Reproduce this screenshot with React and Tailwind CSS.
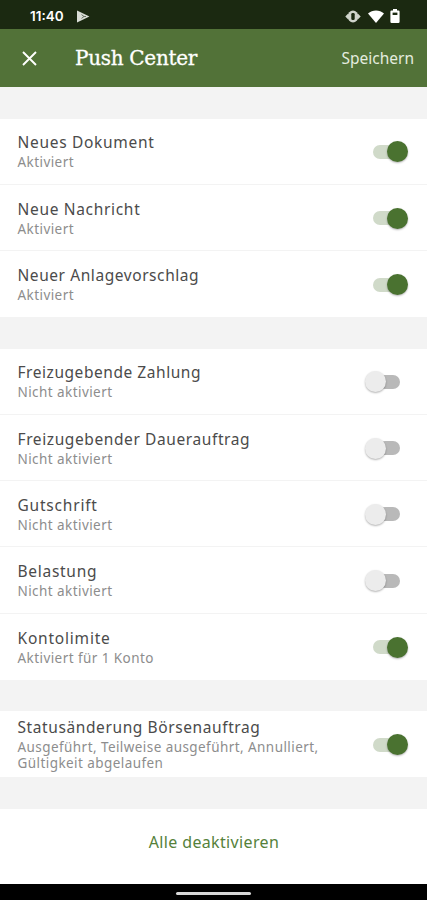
import { useState } from 'react';

/* Push-Einstellungen, nach Abschnitten gruppiert */
const SECTIONS = [
    [
        { id: 'document', title: 'Neues Dokument', status: 'Aktiviert', on: true, tracking: 'tracking-[0.7px]' },
        { id: 'message', title: 'Neue Nachricht', status: 'Aktiviert', on: true, tracking: 'tracking-[0.68px]' },
        { id: 'proposal', title: 'Neuer Anlagevorschlag', status: 'Aktiviert', on: true, tracking: 'tracking-[0.57px]' },
    ],
    [
        { id: 'payment', title: 'Freizugebende Zahlung', status: 'Nicht aktiviert', on: false, tracking: 'tracking-[0.55px]' },
        { id: 'order', title: 'Freizugebender Dauerauftrag', status: 'Nicht aktiviert', on: false, tracking: 'tracking-[0.6px]' },
        { id: 'credit', title: 'Gutschrift', status: 'Nicht aktiviert', on: false, tracking: 'tracking-[0.8px]' },
        { id: 'debit', title: 'Belastung', status: 'Nicht aktiviert', on: false, tracking: 'tracking-[0.72px]' },
        { id: 'limit', title: 'Kontolimite', status: 'Aktiviert für 1 Konto', on: true, tracking: 'tracking-[0.8px]' },
    ],
    [
        {
            id: 'exchange',
            title: 'Statusänderung Börsenauftrag',
            status: 'Ausgeführt, Teilweise ausgeführt, Annulliert, Gültigkeit abgelaufen',
            on: true,
            tracking: 'tracking-[0.6px]',
        },
    ],
];

/* Statusleiste */
const StatusBar = () => (
    <div className="flex h-[29px] shrink-0 items-center bg-[#1b2911] pt-[3px] pr-[27px] pl-[30px] text-white">
        <span className="font-['Inter',sans-serif] text-[13.5px] font-semibold">11:40</span>
        <svg className="ml-[12px]" width="14" height="13" viewBox="0 0 14 13">
            <path d="M1 0.6 13.4 6.5 1 12.4Z" fill="#d9ddd6" />
            <path d="M5.5 4.6 8 6.5 5.5 8.4M8 6.5H10" stroke="#5e6857" strokeWidth="0.9" fill="none" />
        </svg>
        <div className="ml-auto flex items-center">
            <svg width="16" height="13" viewBox="0 0 16 13">
                <path d="M0.3 6.5 3.2 3.6V9.4ZM15.7 6.5 12.8 3.6V9.4Z" fill="#cfd4cb" />
                <ellipse cx="8" cy="6.5" rx="5.3" ry="6" fill="#cfd4cb" />
                <rect x="6.3" y="3" width="3.4" height="7" rx="1.2" fill="#1b2911" />
            </svg>
            <svg className="ml-[7px]" width="16" height="13" viewBox="0 0 16 13">
                <path d="M0 3.4C4.5-0.6 11.5-0.6 16 3.4L8 13Z" fill="#fff" />
            </svg>
            <svg className="ml-[6px]" width="10" height="14" viewBox="0 0 10 14">
                <path d="M3 0h4v1.4h1.4Q9.6 1.4 9.6 2.6v10.2Q9.6 14 8.4 14H1.6Q.4 14 .4 12.8V2.6Q.4 1.4 1.6 1.4H3Z" fill="#fff" />
                <path d="M2.6 3.6h4.8V6H2.6Z" fill="#1b2911" />
            </svg>
        </div>
    </div>
);

/* Schalter */
const Toggle = ({ on, onClick, label }) => (
    <button
        role="switch"
        aria-checked={on}
        aria-label={label}
        onClick={onClick}
        className={`mt-[1.5px] flex h-[22px] w-[35px] shrink-0 cursor-pointer items-center ${on ? 'justify-end' : 'mr-[8px] justify-start'}`}
    >
        {on ? (
            <>
                <span className="-mr-[9px] h-[14px] w-[23px] rounded-full bg-[#d0dac9]" />
                <span className="z-10 size-[21px] rounded-full bg-[#4a7230] shadow-[0_1px_2px_rgba(0,0,0,0.3)]" />
            </>
        ) : (
            <>
                <span className="z-10 size-[21px] rounded-full bg-[#ececec] shadow-[0_1px_2px_rgba(0,0,0,0.3)]" />
                <span className="-ml-[8px] h-[14px] w-[22px] rounded-full bg-[#b9b9b9]" />
            </>
        )}
    </button>
);

/* Einzelne Einstellung */
const SettingRow = ({ item, on, onToggle }) => (
    <div className="flex h-[66.25px] items-center border-b border-[#f3f3f3] pr-[19px] pl-[17.5px] last:border-b-0">
        <div className="w-[325px] pt-[0.5px]">
            <div className={`text-[15.5px] leading-[21px] whitespace-nowrap text-[#4b4b4b] ${item.tracking}`}>{item.title}</div>
            <div className="mt-px text-[13.5px] leading-[16px] tracking-[0.43px] text-[#8d8d8d]">{item.status}</div>
        </div>
        <div className="ml-auto">
            <Toggle on={on} onClick={onToggle} label={item.title} />
        </div>
    </div>
);

const App = () => {
    /* Schalterzustand pro Einstellung */
    const [enabled, setEnabled] = useState(() =>
        Object.fromEntries(SECTIONS.flat().map((item) => [item.id, item.on]))
    );

    const toggle = (id) => setEnabled((prev) => ({ ...prev, [id]: !prev[id] }));

    const disableAll = () =>
        setEnabled((prev) => Object.fromEntries(Object.keys(prev).map((id) => [id, false])));

    return (
        <div className="flex h-[900px] w-[427px] flex-col overflow-hidden bg-[#f3f3f3] font-['Noto_Sans',sans-serif]">
            <StatusBar />

            {/* Kopfzeile */}
            <header className="flex h-[58px] shrink-0 items-center bg-[#527238] pr-[13px] pl-[22px] text-white">
                <svg width="15" height="15" viewBox="0 0 15 15" stroke="#fff" strokeWidth="1.9">
                    <path d="M1 1 14 14M14 1 1 14" />
                </svg>
                <h1 className="ml-[38px] font-['DejaVu_Serif',serif] text-[20px] tracking-[-0.3px] [-webkit-text-stroke:0.3px_white]">Push Center</h1>
                <button className="ml-auto cursor-pointer pt-px text-[15.5px] text-[#e4ecdf]">Speichern</button>
            </header>

            {/* Abschnitte */}
            <main className="mt-[31.5px] flex shrink-0 flex-col gap-[31.25px]">
                {SECTIONS.map((items) => (
                    <section key={items[0].id} className="bg-white">
                        {items.map((item) => (
                            <SettingRow key={item.id} item={item} on={enabled[item.id]} onToggle={() => toggle(item.id)} />
                        ))}
                    </section>
                ))}
            </main>

            {/* Alle deaktivieren */}
            <div className="mt-[31.5px] flex flex-1 items-center justify-center bg-white pb-[9px]">
                <button onClick={disableAll} className="cursor-pointer pl-px text-[16px] tracking-[0.35px] text-[#55813a]">
                    Alle deaktivieren
                </button>
            </div>

            {/* Navigationsleiste */}
            <div className="flex h-[16px] shrink-0 items-center justify-center bg-black pt-[2px]">
                <span className="h-[3px] w-[75px] rounded-full bg-[#d8d8d8]" />
            </div>
        </div>
    );
};

export default App;
